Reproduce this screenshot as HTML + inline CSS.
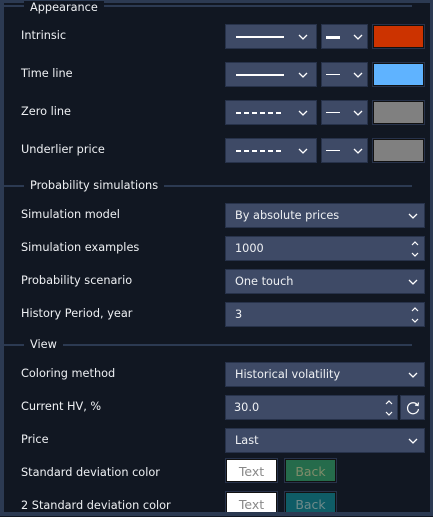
<!DOCTYPE html>
<html><head><style>
*{margin:0;padding:0;box-sizing:border-box}
body{width:433px;height:516px;background:#111722;font-family:"DejaVu Sans","Liberation Sans",sans-serif;font-size:11.3px;color:#eef0f3;position:relative;overflow:hidden}
.fr{position:absolute;background:#2c3a52}
.a{position:absolute}
.lab{position:absolute;left:21px;line-height:14px}
.sec{position:absolute;left:4px;width:408px;height:2px;background:#2c3a52}
.sect{position:absolute;background:#111722;padding:0 6px;line-height:14px}
.box{position:absolute;background:#3e4a66;border:1px solid #27324a;height:25px}
.t{position:absolute;left:9px;top:5px;line-height:14px}
svg{position:absolute}
</style></head><body>
<div class="fr" style="left:0;top:0;width:433px;height:3px"></div>
<div class="fr" style="left:0;top:0;width:4px;height:516px"></div>
<div class="fr" style="left:430px;top:0;width:3px;height:516px"></div>

<div class="sec" style="top:5px"></div><div class="sect" style="left:24px;top:1px">Appearance</div>
<div class="sec" style="top:185px"></div><div class="sect" style="left:24px;top:179px">Probability simulations</div>
<div class="sec" style="top:344px"></div><div class="sect" style="left:24px;top:338px">View</div>

<div class="lab" style="top:29px">Intrinsic</div>
<div class="lab" style="top:67px">Time line</div>
<div class="lab" style="top:105px">Zero line</div>
<div class="lab" style="top:143px">Underlier price</div>

<div class="box" style="left:225px;top:24px;width:92px"><div class="a" style="left:10px;top:11px;width:48px;height:2px;background:#fff"></div><svg style="left:72px;top:8px" width="10" height="8"><path d="M1 2L5 6L9 2" stroke="#fff" fill="none" stroke-width="1.3"/></svg></div>
<div class="box" style="left:321px;top:24px;width:47px"><div class="a" style="left:4px;top:11px;width:14px;height:3px;background:#fff"></div><svg style="left:31px;top:8px" width="10" height="8"><path d="M1 2L5 6L9 2" stroke="#fff" fill="none" stroke-width="1.3"/></svg></div>
<div class="a" style="left:372px;top:24px;width:53px;height:25px;border:1px solid #27324a;background:#cc3300;box-shadow:inset 0 0 0 1px #111"></div>

<div class="box" style="left:225px;top:62px;width:92px"><div class="a" style="left:10px;top:11px;width:48px;height:2px;background:#fff"></div><svg style="left:72px;top:8px" width="10" height="8"><path d="M1 2L5 6L9 2" stroke="#fff" fill="none" stroke-width="1.3"/></svg></div>
<div class="box" style="left:321px;top:62px;width:47px"><div class="a" style="left:4px;top:11px;width:14px;height:1px;background:#fff"></div><svg style="left:31px;top:8px" width="10" height="8"><path d="M1 2L5 6L9 2" stroke="#fff" fill="none" stroke-width="1.3"/></svg></div>
<div class="a" style="left:372px;top:62px;width:53px;height:25px;border:1px solid #27324a;background:#5fb3ff;box-shadow:inset 0 0 0 1px #111"></div>

<div class="box" style="left:225px;top:100px;width:92px"><div class="a" style="left:10px;top:11px;width:48px;height:2px;background:repeating-linear-gradient(90deg,#fff 0 5px,transparent 5px 8px)"></div><svg style="left:72px;top:8px" width="10" height="8"><path d="M1 2L5 6L9 2" stroke="#fff" fill="none" stroke-width="1.3"/></svg></div>
<div class="box" style="left:321px;top:100px;width:47px"><div class="a" style="left:4px;top:11px;width:14px;height:1px;background:#fff"></div><svg style="left:31px;top:8px" width="10" height="8"><path d="M1 2L5 6L9 2" stroke="#fff" fill="none" stroke-width="1.3"/></svg></div>
<div class="a" style="left:372px;top:100px;width:53px;height:25px;border:1px solid #27324a;background:#808080;box-shadow:inset 0 0 0 1px #111"></div>

<div class="box" style="left:225px;top:138px;width:92px"><div class="a" style="left:10px;top:11px;width:48px;height:2px;background:repeating-linear-gradient(90deg,#fff 0 5px,transparent 5px 8px)"></div><svg style="left:72px;top:8px" width="10" height="8"><path d="M1 2L5 6L9 2" stroke="#fff" fill="none" stroke-width="1.3"/></svg></div>
<div class="box" style="left:321px;top:138px;width:47px"><div class="a" style="left:4px;top:11px;width:14px;height:1px;background:#fff"></div><svg style="left:31px;top:8px" width="10" height="8"><path d="M1 2L5 6L9 2" stroke="#fff" fill="none" stroke-width="1.3"/></svg></div>
<div class="a" style="left:372px;top:138px;width:53px;height:25px;border:1px solid #27324a;background:#808080;box-shadow:inset 0 0 0 1px #111"></div>

<div class="lab" style="top:208px">Simulation model</div>
<div class="lab" style="top:241px">Simulation examples</div>
<div class="lab" style="top:274px">Probability scenario</div>
<div class="lab" style="top:307px">History Period, year</div>
<div class="box" style="left:225px;top:203px;width:200px"><div class="t">By absolute prices</div><svg style="left:182px;top:8px" width="10" height="8"><path d="M1 2L5 6L9 2" stroke="#fff" fill="none" stroke-width="1.3"/></svg></div>
<div class="box" style="left:225px;top:236px;width:200px"><div class="t">1000</div><svg style="left:185px;top:3px" width="8" height="18"><path d="M1 5L4 2L7 5M1 13L4 16L7 13" stroke="#fff" fill="none" stroke-width="1.2"/></svg></div>
<div class="box" style="left:225px;top:269px;width:200px"><div class="t">One touch</div><svg style="left:182px;top:8px" width="10" height="8"><path d="M1 2L5 6L9 2" stroke="#fff" fill="none" stroke-width="1.3"/></svg></div>
<div class="box" style="left:225px;top:302px;width:200px"><div class="t">3</div><svg style="left:185px;top:3px" width="8" height="18"><path d="M1 5L4 2L7 5M1 13L4 16L7 13" stroke="#fff" fill="none" stroke-width="1.2"/></svg></div>

<div class="lab" style="top:367px">Coloring method</div>
<div class="lab" style="top:400px">Current HV, %</div>
<div class="lab" style="top:433px">Price</div>
<div class="lab" style="top:466px">Standard deviation color</div>
<div class="lab" style="top:499px">2 Standard deviation color</div>
<div class="box" style="left:225px;top:362px;width:200px"><div class="t">Historical volatility</div><svg style="left:182px;top:8px" width="10" height="8"><path d="M1 2L5 6L9 2" stroke="#fff" fill="none" stroke-width="1.3"/></svg></div>
<div class="box" style="left:225px;top:395px;width:173px"><div class="t" style="left:8px">30.0</div><svg style="left:159px;top:3px" width="8" height="18"><path d="M1 5L4 2L7 5M1 13L4 16L7 13" stroke="#fff" fill="none" stroke-width="1.2"/></svg></div>
<div class="box" style="left:400px;top:395px;width:25px"><svg style="left:4px;top:4px" width="16" height="16"><path d="M12.5 5A5.5 5.5 0 1 0 13.5 9" stroke="#fff" fill="none" stroke-width="1.2"/><path d="M10 5L13 5.5L13.5 2.5" stroke="#fff" fill="none" stroke-width="1.2"/></svg></div>
<div class="box" style="left:225px;top:428px;width:200px"><div class="t">Last</div><svg style="left:182px;top:8px" width="10" height="8"><path d="M1 2L5 6L9 2" stroke="#fff" fill="none" stroke-width="1.3"/></svg></div>

<div class="a" style="left:225px;top:458px;width:53px;height:25px;border:1px solid #27324a;background:#fff;box-shadow:inset 0 0 0 1px #111;color:#888;text-align:center;line-height:25px;font-size:12.5px">Text</div>
<div class="a" style="left:284px;top:458px;width:53px;height:25px;border:1px solid #27324a;background:#256b4b;box-shadow:inset 0 0 0 1px #111;color:#7f8c6a;text-align:center;line-height:25px;font-size:12.5px">Back</div>
<div class="a" style="left:225px;top:491px;width:53px;height:25px;border:1px solid #27324a;background:#fff;box-shadow:inset 0 0 0 1px #111;color:#888;text-align:center;line-height:25px;font-size:12.5px">Text</div>
<div class="a" style="left:284px;top:491px;width:53px;height:25px;border:1px solid #27324a;background:#0f5c66;box-shadow:inset 0 0 0 1px #111;color:#6f8a8a;text-align:center;line-height:25px;font-size:12.5px">Back</div>
<div class="fr" style="left:0;top:512px;width:433px;height:4px"></div>
</body></html>
